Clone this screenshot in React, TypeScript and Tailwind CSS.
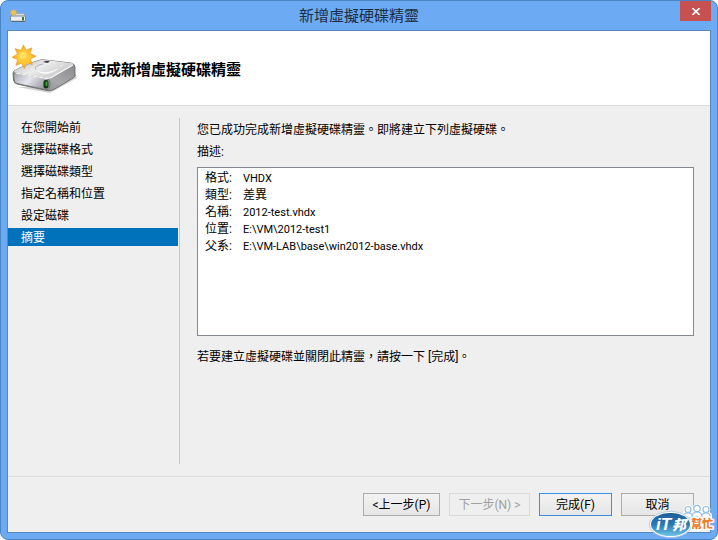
import { useId } from 'react';

type DetailRow = {
  label: string;
  value: string;
};

const steps = ['在您開始前', '選擇磁碟格式', '選擇磁碟類型', '指定名稱和位置', '設定磁碟', '摘要'];

const details: DetailRow[] = [
  { label: '格式:', value: 'VHDX' },
  { label: '類型:', value: '差異' },
  { label: '名稱:', value: '2012-test.vhdx' },
  { label: '位置:', value: 'E:\\VM\\2012-test1' },
  { label: '父系:', value: 'E:\\VM-LAB\\base\\win2012-base.vhdx' },
];

// latin values are set a size smaller than the Chinese ones
const isLatin = (text: string) => /^[\x20-\x7e]+$/.test(text);

function DiskIcon() {
  const id = useId();

  return (
    <svg viewBox="0 0 66 50" className="h-[50px] w-[66px]" aria-hidden="true">
      <defs>
        <linearGradient id={`${id}top`} x1="0" y1="0" x2="1" y2="0.6">
          <stop offset="0" stopColor="#b4b4b6" />
          <stop offset="0.5" stopColor="#ececec" />
          <stop offset="1" stopColor="#c4c4c6" />
        </linearGradient>
        <linearGradient id={`${id}front`} x1="0" y1="0" x2="1" y2="0.4">
          <stop offset="0" stopColor="#a2a2aa" />
          <stop offset="0.5" stopColor="#e6e6ee" />
          <stop offset="1" stopColor="#9c9ca4" />
        </linearGradient>
        <linearGradient id={`${id}side`} x1="0" y1="1" x2="1" y2="0">
          <stop offset="0" stopColor="#77777b" />
          <stop offset="0.5" stopColor="#a9a9ac" />
          <stop offset="1" stopColor="#838387" />
        </linearGradient>
        <radialGradient id={`${id}sun`}>
          <stop offset="0" stopColor="#ffe04a" />
          <stop offset="0.6" stopColor="#ffc22b" />
          <stop offset="1" stopColor="#f09a1c" />
        </radialGradient>
      </defs>
      <path d="M5 42 38 48 65 33 63 27 36 41Z" fill="#000" opacity="0.18" />
      <path
        d="M2 26C9 22 19 18 28 15Q30 14.500 33 15L59 18Q63 19 63 22V30Q63 32 61 33L42 44.500Q39 46 35 45.500L5 39Q2 38 1.500 35L1 29Q1 27 2 26Z"
        fill={`url(#${id}side)`}
        stroke="#606064"
        strokeWidth="0.8"
      />
      <path
        d="M2 26C9 22 19 18 28 15Q30 14.500 33 15L59 18Q62 18.500 61 20L40 32Q37 33.500 34 33L4 28Q1 27 2 26Z"
        fill={`url(#${id}top)`}
      />
      <path d="M24 25Q31 29 41 25.500T50 19.500Q47 25 39 28T24 25Z" fill="#fff" opacity="0.8" />
      <path d="M24 25Q21 21 31 19" fill="none" stroke="#a4a4a8" strokeWidth="0.8" />
      <path d="M31 17 34 15.800 38 16.300 35.500 18Z" fill="#414145" />
      <path
        d="M4 28 34 33.500Q38 34 38 37L37.500 42Q37 45.500 33 44.500L5 38.500Q2.500 38 2.200 35L1.700 30Q1.500 27.500 4 28Z"
        fill={`url(#${id}front)`}
        stroke="#6c6c72"
        strokeWidth="0.8"
      />
      <path d="M3.500 28 34 33.300Q38 33.500 40 32L61 20" fill="none" stroke="#fafafa" strokeWidth="1.2" />
      <rect x="31.500" y="35" width="5" height="8.500" rx="2" fill="#123c13" />
      <rect x="33.500" y="36.500" width="2" height="4.500" rx="0.8" fill="#35a02b" />
      <path
        d="M11.500 0 14.200 5.200 19.800 2.800 18.200 8.600 24 11.200 18.300 14 20.300 19.600 14.600 18 12.300 23.500 9.400 18.200 3.900 20.400 5.600 14.600 0 12.200 5.500 9 3 3.600 8.900 5.300Z"
        fill={`url(#${id}sun)`}
        stroke="#e29a33"
        strokeWidth="0.6"
      />
      <circle cx="12" cy="11.800" r="6" fill="#ffc93a" />
      <circle cx="11" cy="10.500" r="3.500" fill="#ffdf63" />
    </svg>
  );
}

function WindowIcon() {
  return (
    <svg viewBox="0 0 16 16" className="ml-[3px] h-4 w-4" aria-hidden="true">
      <path d="M3 5.500H14L15.500 9H0.500Z" fill="#d9dde2" stroke="#8f969f" strokeWidth="0.5" />
      <rect x="0.500" y="8" width="15" height="5.500" rx="1" fill="#eceef1" stroke="#6d747c" strokeWidth="0.8" />
      <path d="M1.500 13.300H15" stroke="#5b6269" />
      <rect x="12" y="9" width="2" height="3.500" fill="#2f7d35" />
      <path
        d="M3.500 1 4.500 2.500 6.200 2 5.900 3.700 7.200 4.800 5.700 5.600 5.500 7.300 3.900 6.700 2.500 7.800 1.900 6.100 0.200 5.700 1.200 4.200 0.600 2.500 2.400 2.600Z"
        fill="#f3c04a"
        stroke="#c9a15a"
        strokeWidth="0.4"
      />
    </svg>
  );
}

function SiteLogo() {
  const id = useId();

  return (
    <svg
      viewBox="0 0 68 36"
      className="pointer-events-none absolute right-0 bottom-px h-9 w-[68px]"
      role="img"
      aria-label="iT邦幫忙"
    >
      <defs>
        <linearGradient id={`${id}oval`} x1="0" y1="0" x2="0" y2="1">
          <stop offset="0" stopColor="#1d5c98" />
          <stop offset="0.5" stopColor="#2b78b3" />
          <stop offset="1" stopColor="#6fc4e6" />
        </linearGradient>
      </defs>
      <g strokeLinejoin="round">
        <g fill="#fff" stroke="#fff" strokeWidth="4">
          <path d="M34 16Q34 11 39 11T44 16ZM43 15Q43 10 48 10T53 15ZM52 16Q52 11 57 11T61 16Z" />
          <circle cx="39" cy="7.500" r="2.500" />
          <circle cx="48" cy="6.500" r="2.500" />
          <circle cx="57" cy="7.500" r="2.500" />
        </g>
        <g fill="#fff" stroke="#8fbbde" strokeWidth="1.200">
          <path d="M34 16Q34 11 39 11T44 16ZM52 16Q52 11 57 11T61 16ZM43 15Q43 10 48 10T53 15Z" />
          <circle cx="39" cy="7.500" r="3" />
          <circle cx="57" cy="7.500" r="3" />
          <circle cx="48" cy="6.500" r="3.200" />
        </g>
      </g>
      <ellipse cx="21.500" cy="22.500" rx="21" ry="13" fill="#fff" stroke="#a3c4e2" strokeWidth="0.8" />
      <ellipse cx="21.500" cy="22.500" rx="19.500" ry="11.500" fill={`url(#${id}oval)`} />
      <g fontWeight="900" fontStyle="italic" fill="#fff">
        <text x="7" y="28" fontSize="17" fontFamily="Liberation Sans">
          iT
        </text>
        <text x="23" y="28" fontSize="14" fontFamily="Noto Sans CJK TC">
          邦
        </text>
      </g>
      <text
        x="42"
        y="26"
        fontSize="11"
        fontWeight="900"
        fill="#f07b24"
        stroke="#fff"
        strokeWidth="3"
        strokeLinejoin="round"
        paintOrder="stroke"
        fontFamily="Noto Sans CJK TC"
      >
        幫忙
      </text>
    </svg>
  );
}

function TitleBar() {
  return (
    <header className="grid h-[29px] shrink-0 grid-cols-[46px_1fr_46px] items-center">
      <WindowIcon />
      <h1 className="text-center text-[15px] leading-5 text-[#1c2c40]">新增虛擬硬碟精靈</h1>
      <button
        type="button"
        aria-label="關閉"
        className="flex h-5 w-[31px] items-center justify-center self-start justify-self-end bg-[#c75050] text-white"
      >
        <svg viewBox="0 0 8 7" className="h-[7px] w-2" stroke="currentColor" strokeWidth="1.6" aria-hidden="true">
          <path d="M0.500 0 7.500 7M7.500 0 0.500 7" />
        </svg>
      </button>
    </header>
  );
}

function StepList({ current }: { current: number }) {
  return (
    <nav className="w-[170px] shrink-0">
      <ol className="flex flex-col gap-1">
        {steps.map((step, index) => (
          <li
            key={step}
            aria-current={index === current ? 'step' : undefined}
            className={`h-[18px] pl-[13px] leading-5 ${index === current ? 'bg-[#0072bc] text-white' : ''}`}
          >
            {step}
          </li>
        ))}
      </ol>
    </nav>
  );
}

const buttonBase = 'h-[23px] border text-center leading-[22px]';
const buttonNormal = 'border-[#acacac] bg-linear-to-b from-[#f2f2f2] to-[#e6e6e6]';
const buttonDefault = 'border-[#3c8fe0] bg-linear-to-b from-[#f2f2f2] to-[#e6e6e6]';

export default function App() {
  return (
    <div
      lang="zh-Hant"
      className="relative flex min-h-screen flex-col rounded-lg border border-[#4a84c4] bg-[#6daaf4] px-1.5 pb-1.5 font-['Roboto','Noto_Sans_CJK_TC',sans-serif] text-xs text-black"
    >
      <TitleBar />
      <main className="flex flex-1 flex-col border border-[#5589bd] bg-[#efefef]">
        <div className="flex h-[75px] items-center gap-[13px] border-b border-[#dcdcdc] bg-white pt-1 pl-1">
          <DiskIcon />
          <h2 className="text-[15px] leading-6 font-bold">完成新增虛擬硬碟精靈</h2>
        </div>

        <div className="flex flex-1 pt-3 pb-3">
          <StepList current={5} />
          <section className="ml-px flex-1 border-l border-[#c6c6c6] pt-px pr-4 pl-[17px]">
            <p className="leading-[22px]">您已成功完成新增虛擬硬碟精靈。即將建立下列虛擬硬碟。</p>
            <p className="leading-[22px]">描述:</p>
            <dl className="mt-1 grid h-[169px] grid-cols-[38px_1fr] content-start border border-[#828790] bg-white px-[7px] pt-0.5 leading-[17px]">
              {details.map(({ label, value }) => (
                <div key={label} className="contents">
                  <dt>{label}</dt>
                  <dd className={isLatin(value) ? 'text-[11px] leading-[17px]' : ''}>{value}</dd>
                </div>
              ))}
            </dl>
            <p className="mt-2.5 leading-[22px]">若要建立虛擬硬碟並關閉此精靈，請按一下 [完成]。</p>
          </section>
        </div>

        <footer className="flex h-14 justify-end gap-[9px] border-t border-[#dcdcdc] pt-4 pr-4">
          <button type="button" className={`${buttonBase} ${buttonNormal} w-[77px]`}>
            &lt;上一步(P)
          </button>
          <button type="button" disabled className={`${buttonBase} w-[81px] border-[#d9d9d9] text-[#a0a0a0]`}>
            下一步(N) &gt;
          </button>
          <button type="button" className={`${buttonBase} ${buttonDefault} w-[73px]`}>
            完成(F)
          </button>
          <button type="button" className={`${buttonBase} ${buttonNormal} w-[73px]`}>
            取消
          </button>
        </footer>
      </main>
      <SiteLogo />
    </div>
  );
}
